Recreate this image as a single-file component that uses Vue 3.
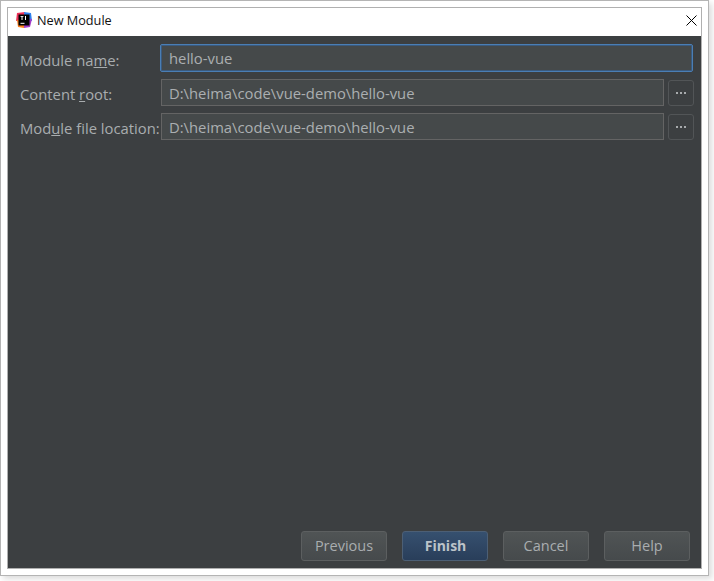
<script setup>
const rows = [
  { before: 'Content ', key: 'r', after: 'oot:', value: 'D:\\heima\\code\\vue-demo\\hello-vue' },
  { before: 'Mod', key: 'u', after: 'le file location:', value: 'D:\\heima\\code\\vue-demo\\hello-vue' },
]
const buttons = [
  { label: 'Previous', primary: false },
  { label: 'Finish', primary: true },
  { label: 'Cancel', primary: false },
  { label: 'Help', primary: false },
]
</script>

<template>
  <div class="page">
    <div class="frame">
      <div class="window">
        <header class="titlebar">
          <svg class="logo" width="16" height="16" viewBox="0 0 16 16">
            <path d="M1 1 L9 0 L8 8 L0 9 Z" fill="#f0325a" />
            <path d="M8 0 L15 1 L16 9 L9 8 Z" fill="#2f80ed" />
            <path d="M1 8 L9 7 L8 16 L2 15 Z" fill="#fc801d" />
            <path d="M8 8 L16 7 L14 15 L8 16 Z" fill="#a33dc8" />
            <rect x="2.5" y="2.5" width="11" height="11" fill="#000" />
            <path d="M4.5 4 H7.5 V4.8 H6.5 V8 H5.5 V4.8 H4.5 Z M9 4 H10 V8 H9 Z" fill="#fff" />
            <rect x="4.5" y="10.8" width="4" height="1" fill="#fff" />
          </svg>
          <span class="title">New Module</span>
          <svg class="close" width="11" height="11" viewBox="0 0 11 11">
            <path d="M0.5 0.5 L10.5 10.5 M10.5 0.5 L0.5 10.5" stroke="#000" stroke-width="1" />
          </svg>
        </header>
        <main class="content">
          <form class="form">
            <label class="label first">Module na<u>m</u>e:</label>
            <div class="input focused wide">hello-vue</div>
            <template v-for="row in rows" :key="row.before">
              <label class="label">{{ row.before }}<u>{{ row.key }}</u>{{ row.after }}</label>
              <div class="input">{{ row.value }}</div>
              <button type="button" class="browse"><span></span><span></span><span></span></button>
            </template>
          </form>
          <footer class="footer">
            <button
              v-for="b in buttons"
              :key="b.label"
              type="button"
              class="btn"
              :class="{ primary: b.primary }"
            >{{ b.label }}</button>
          </footer>
        </main>
      </div>
    </div>
  </div>
</template>

<style scoped>
.page {
  width: 714px;
  height: 581px;
  background: #fff;
  font-family: "Open Sans", "Noto Sans", sans-serif;
  overflow: hidden;
}
.frame {
  width: 709px;
  height: 576px;
  box-sizing: border-box;
  background: #fff;
  border: 1px solid #b4b4b4;
  padding: 6px;
  box-shadow: 3px 3px 6px rgba(0, 0, 0, 0.14);
}
.window {
  height: 100%;
  box-sizing: border-box;
  border: 1px solid #b0b0b0;
  display: flex;
  flex-direction: column;
}
.titlebar {
  height: 28px;
  flex: none;
  box-sizing: border-box;
  background: #fff;
  display: flex;
  align-items: center;
  padding: 0 4px 4px 8px;
}
.logo { flex: none; }
.title {
  margin-left: 5px;
  font-size: 12.7px;
  color: #111;
  flex: 1;
}
.close { flex: none; }
.content {
  flex: 1;
  background: #3c3f41;
  display: flex;
  flex-direction: column;
  justify-content: space-between;
  min-height: 0;
}
.form {
  display: grid;
  grid-template-columns: 141px 503px 30px;
  grid-template-rows: 28px 27px 27px;
  row-gap: 7px;
  align-items: center;
  padding: 8px 0 0 12px;
}
.label {
  color: #a9adaf;
  font-size: 14.8px;
  white-space: nowrap;
  padding-top: 2px;
}
.label.first {
  padding-top: 4px;
}
.input {
  box-sizing: border-box;
  height: 27px;
  background: #45494a;
  border: 1px solid #646464;
  color: #abafb1;
  font-size: 14.8px;
  line-height: 26px;
  padding-left: 7px;
  white-space: nowrap;
}
.input.wide {
  grid-column: 2 / 4;
  width: 533px;
  height: 28px;
  margin-left: -1px;
  padding-left: 8px;
  line-height: 27px;
  border: 1px solid #4a7eb5;
  border-radius: 2px;
  box-shadow: inset 0 0 0 1px #3a5a7e;
}
.browse {
  width: 26px;
  height: 26px;
  align-self: end;
  margin-left: 4px;
  padding: 0;
  box-sizing: border-box;
  background: #3c3f41;
  border: 1px solid #525557;
  border-radius: 3px;
  display: flex;
  align-items: center;
  justify-content: center;
  gap: 2px;
}
.browse span {
  width: 2px;
  height: 2px;
  background: #a8abad;
}
.footer {
  display: flex;
  justify-content: flex-end;
  gap: 15px;
  padding: 0 11px 7px 0;
}
.btn {
  width: 86px;
  height: 30px;
  box-sizing: border-box;
  font-family: inherit;
  font-size: 14.5px;
  color: #a9adaf;
  padding: 0 0 2px;
  border: 1px solid #5c5f60;
  border-radius: 3px;
  background: linear-gradient(#505455, #464a4c);
}
.btn.primary {
  color: #bcc3c9;
  font-size: 14px;
  font-weight: 700;
  padding-left: 1px;
  border-color: #4c5f75;
  background: linear-gradient(#36506f, #293e5a);
}
</style>
